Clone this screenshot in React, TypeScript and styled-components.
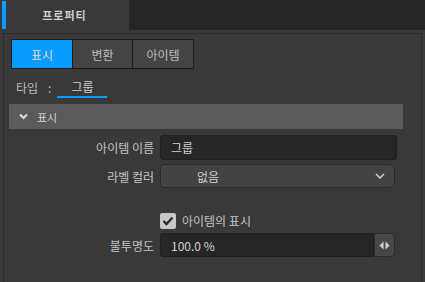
import React from "react";
import styled, { createGlobalStyle } from "styled-components";

const Global = createGlobalStyle`
  html, body { margin: 0; padding: 0; background: #393939; }
  body { font-family: "Noto Sans CJK KR", "Noto Sans", sans-serif; font-size: 11px; color: #c4c4c4; }
  * { box-sizing: border-box; }
`;

const Page = styled.div`
  width: 425px;
  height: 282px;
  display: flex;
  flex-direction: column;
  background: #393939;
  overflow: hidden;
`;

const TopBar = styled.div`
  height: 30px;
  background: #262626;
  display: flex;
`;

const Tab = styled.div`
  width: 129px;
  background: #393939;
  display: flex;
  align-items: stretch;
`;

const Accent = styled.div`
  width: 4px;
  margin: 1px 0 1px 2px;
  background: #0a9bff;
`;

const TabLabel = styled.div`
  flex: 1;
  display: flex;
  align-items: center;
  justify-content: center;
  padding-right: 6px;
  font-weight: 700;
  font-size: 11px;
  letter-spacing: 1px;
  color: #d0d0d0;
`;

const Panel = styled.div`
  flex: 1;
  margin: 3px 3px 0 3px;
  border: 1px solid #2a2a2a;
  border-bottom: none;
  background: #393939;
  padding: 5px 0 0 0;
  display: flex;
  flex-direction: column;
`;

const Segment = styled.div`
  margin-left: 7px;
  width: 183px;
  height: 30px;
  display: grid;
  grid-template-columns: 60px 59px 60px;
  gap: 1px;
  border: 1px solid #1e1e1e;
  background: #1e1e1e;
`;

const SegButton = styled.div<{ $active?: boolean }>`
  display: flex;
  align-items: center;
  justify-content: center;
  font-size: 12px;
  background: ${(p) => (p.$active ? "#0a9bff" : "#444444")};
  color: ${(p) => (p.$active ? "#dcdcdc" : "#bdbdbd")};
`;

const TypeRow = styled.div`
  margin: 7px 0 0 12px;
  height: 22px;
  display: flex;
  align-items: center;
  font-size: 12px;
`;

const TypeLabel = styled.span`
  color: #bdbdbd;
`;

const Colon = styled.span`
  margin-left: 10px;
  color: #bdbdbd;
`;

const TypeValue = styled.span`
  margin-left: 6px;
  width: 50px;
  height: 22px;
  display: flex;
  align-items: center;
  justify-content: center;
  border-bottom: 2px solid #0a9bff;
  color: #d0d0d0;
`;

const SectionHeader = styled.div`
  margin: 6px 18px 0 5px;
  height: 25px;
  background: #5a5a5a;
  display: flex;
  align-items: center;
  padding-left: 10px;
  gap: 9px;
  color: #cfcfcf;
`;

const Row = styled.div<{ $h: number; $mt: number }>`
  margin-top: ${(p) => p.$mt}px;
  height: ${(p) => p.$h}px;
  display: grid;
  grid-template-columns: 150px 1fr;
  column-gap: 6px;
  align-items: center;
  padding-right: 24px;
`;

const Label = styled.div`
  text-align: right;
  font-size: 12px;
  color: #c4c4c4;
`;

const TextInput = styled.div`
  height: 100%;
  background: #262626;
  border: 1px solid #1f1f1f;
  border-radius: 3px;
  display: flex;
  align-items: center;
  padding-left: 10px;
  color: #d4d4d4;
  font-size: 12px;
`;

const Select = styled.div`
  height: 100%;
  margin-right: 2px;
  background: #434343;
  border: 1px solid #2b2b2b;
  border-radius: 4px;
  display: flex;
  align-items: center;
  justify-content: space-between;
  padding: 0 9px 0 36px;
  color: #cfcfcf;
  font-size: 12px;
`;

const CheckCell = styled.div`
  display: flex;
  align-items: center;
  gap: 6px;
  font-size: 12px;
  color: #c4c4c4;
`;

const Box = styled.div`
  width: 16px;
  height: 16px;
  border-radius: 2px;
  background: #c9c9c9;
  display: flex;
  align-items: center;
  justify-content: center;
`;

const NumberField = styled.div`
  height: 100%;
  margin-right: 2px;
  display: flex;
`;

const NumberInput = styled.div`
  flex: 1;
  background: #262626;
  border: 1px solid #1f1f1f;
  border-radius: 3px 0 0 3px;
  display: flex;
  align-items: center;
  padding-left: 10px;
  color: #d4d4d4;
  font-size: 12px;
`;

const Stepper = styled.div`
  width: 21px;
  background: #474747;
  border: 1px solid #2b2b2b;
  border-radius: 0 4px 4px 0;
  display: flex;
  align-items: center;
  justify-content: center;
`;

export default function App() {
  return (
    <Page>
      <Global />
      <TopBar>
        <Tab>
          <Accent />
          <TabLabel>프로퍼티</TabLabel>
        </Tab>
      </TopBar>
      <Panel>
        <Segment>
          <SegButton $active>표시</SegButton>
          <SegButton>변환</SegButton>
          <SegButton>아이템</SegButton>
        </Segment>
        <TypeRow>
          <TypeLabel>타입</TypeLabel>
          <Colon>:</Colon>
          <TypeValue>그룹</TypeValue>
        </TypeRow>
        <SectionHeader>
          <svg width="9" height="7" viewBox="0 0 9 7">
            <path d="M1 1.5 L4.5 5 L8 1.5" stroke="#d8d8d8" strokeWidth="2.2" fill="none" />
          </svg>
          <span>표시</span>
        </SectionHeader>
        <Row $h={25} $mt={6}>
          <Label>아이템 이름</Label>
          <TextInput>그룹</TextInput>
        </Row>
        <Row $h={24} $mt={4}>
          <Label>라벨 컬러</Label>
          <Select>
            <span>없음</span>
            <svg width="10" height="6" viewBox="0 0 10 6">
              <path d="M1 1 L5 5 L9 1" stroke="#cfcfcf" strokeWidth="1.5" fill="none" />
            </svg>
          </Select>
        </Row>
        <Row $h={16} $mt={24}>
          <span />
          <CheckCell>
            <Box>
              <svg width="12" height="10" viewBox="0 0 12 10">
                <path d="M1.5 5 L4.5 8 L10.5 1.5" stroke="#2e2e2e" strokeWidth="2.4" fill="none" />
              </svg>
            </Box>
            <span>아이템의 표시</span>
          </CheckCell>
        </Row>
        <Row $h={24} $mt={5}>
          <Label>불투명도</Label>
          <NumberField>
            <NumberInput>100.0 %</NumberInput>
            <Stepper>
              <svg width="11" height="9" viewBox="0 0 11 9">
                <path d="M4.5 0.5 L0.5 4.5 L4.5 8.5 Z" fill="#d0d0d0" />
                <path d="M6.5 0.5 L10.5 4.5 L6.5 8.5 Z" fill="#d0d0d0" />
              </svg>
            </Stepper>
          </NumberField>
        </Row>
      </Panel>
    </Page>
  );
}
